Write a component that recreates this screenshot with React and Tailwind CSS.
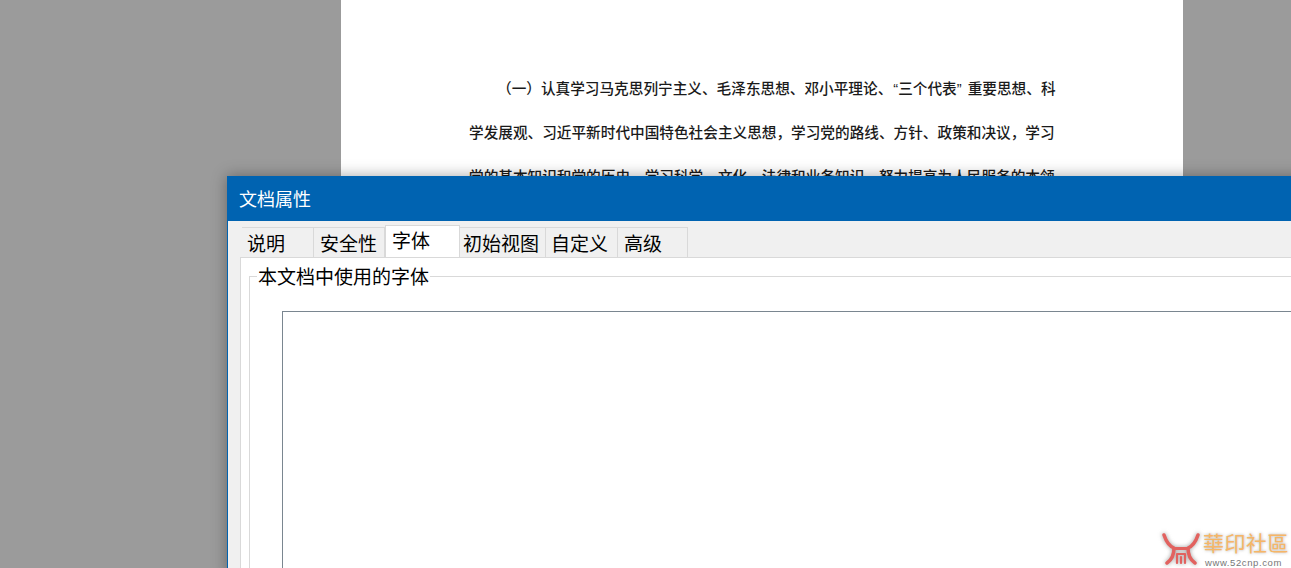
const tabs = [
  { label: "说明", width: "w-[72px]", pad: "pl-[5px]" },
  { label: "安全性", width: "w-[71px]", pad: "pl-[6px]" },
  { label: "字体", width: "w-[75px]", pad: "pl-[6px]", active: true },
  { label: "初始视图", width: "w-[86px]", pad: "pl-[3px]" },
  { label: "自定义", width: "w-[72px]", pad: "pl-[5px]" },
  { label: "高级", width: "w-[70px]", pad: "pl-[6px]" },
];

const cjk = "font-['Noto_Sans_CJK_SC',sans-serif]";
const quote = "font-['Liberation_Sans',sans-serif]";

const DocPage = () => (
  <div className="ml-[341px] h-full w-[842px] bg-white pl-[128px] pr-[128px] pt-[66px]">
    <div className={`${cjk} text-[14.65px] font-medium leading-[44px] text-[#1a1a1a]`}>
      <p className="whitespace-nowrap pl-[28px]">（一）认真学习马克思列宁主义、毛泽东思想、邓小平理论、<span className={`${quote} ml-px`}>“</span>三个代表<span className={`${quote} mr-[2px]`}>” </span>重要思想、科</p>
      <p className="-mt-px whitespace-nowrap">学发展观、习近平新时代中国特色社会主义思想，学习党的路线、方针、政策和决议，学习</p>
      <p className="whitespace-nowrap">党的基本知识和党的历史，学习科学、文化、法律和业务知识，努力提高为人民服务的本领</p>
    </div>
  </div>
);

const Dialog = () => (
  <div className={`${cjk} absolute left-[227px] top-[176px] h-[400px] w-[1100px] border-l border-t border-[#0063b1] shadow-[0_0_14px_rgba(0,0,0,0.35)]`}>
    <div className="flex h-[44px] items-center bg-[#0063b1] pb-[2px] pl-[11px] text-[18px] text-white">文档属性</div>
    <div className="h-full bg-[#f0f0f0] pl-[12px] pt-[4px]">
      <div className="flex h-[32px] items-end pl-[2px]">
        {tabs.map((tab) => (
          <div
            key={tab.label}
            className={`${tab.width} ${tab.pad} flex items-center border-r border-t border-[#d9d9d9] text-[19px] text-black ${
              tab.active ? "h-[32px] border-l bg-white pb-[2px]" : "h-[30px] bg-[#f0f0f0] pt-px"
            }`}
          >
            {tab.label}
          </div>
        ))}
      </div>
      <div className="h-full border-l border-t border-[#d9d9d9] bg-white pl-[8px] pt-[18px]">
        <div className="relative h-full border-l border-t border-[#d9d9d9] pl-[32px] pt-[34px]">
          <span className="absolute -top-[11px] left-[7px] bg-white px-px text-[19px] leading-[19px] text-black">本文档中使用的字体</span>
          <div className="h-full border-l border-t border-[#7a8690] bg-white"></div>
        </div>
      </div>
    </div>
  </div>
);

const Watermark = () => (
  <div className="absolute left-[1160px] top-[530px] flex items-start">
    <svg width="41" height="37" viewBox="0 0 41 37" fill="none" className="mt-px drop-shadow-[0_0_2px_rgba(110,110,110,0.7)]">
      <g stroke="#e2625f" strokeLinecap="round" strokeLinejoin="round">
        <path d="M4 4C6 10 9 15 14 17C14 22 13 28 7 32" strokeWidth="3.500" />
        <path d="M38 4C36 10 33 15 28 17C28 22 29 28 35 32" strokeWidth="3.500" />
        <path d="M14 17.500H28" strokeWidth="3" />
        <path d="M17 32V23H25V32M21 26V32" strokeWidth="2.200" />
      </g>
    </svg>
    <div className="ml-[2px] flex flex-col">
      <span className="font-['Noto_Sans_CJK_TC',sans-serif] text-[21px] leading-[24px] tracking-[0.5px] text-[#f6b667] [text-shadow:0_0_3px_rgba(90,90,90,0.5)]">華印社區</span>
      <span className="mt-[3px] pl-[2px] font-['Liberation_Sans',sans-serif] text-[9.500px] leading-[11px] tracking-[0.6px] text-[#777777]">www.52cnp.com</span>
    </div>
  </div>
);

const App = () => (
  <div className="relative h-[568px] w-[1291px] overflow-hidden bg-[#9b9b9b]">
    <DocPage />
    <Dialog />
    <Watermark />
  </div>
);

export default App;
